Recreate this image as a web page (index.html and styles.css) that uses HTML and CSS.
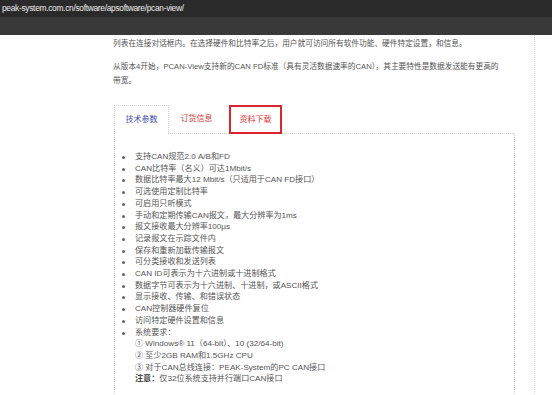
FILE: index.html
```html
<!DOCTYPE html>
<html lang="zh-CN">
<head>
    <meta charset="UTF-8"/>
    <title>PCAN-View</title>
    <link rel="stylesheet" href="styles.css">
</head>
<body>

<header class="browser-bar">
    <div class="url">peak-system.com.cn/software/apsoftware/pcan-view/</div>
    <div class="toolbar"></div>
</header>

<div class="page">
    <main class="main-content">
        <p class="text lead">PCAN-View 是一个用于查看、发送和记录 CAN 报文的 Windows 软件，所有支持的 PEAK CAN 接口都会被识别并显示在硬件<br>列表在连接对话框内。在选择硬件和比特率之后，用户就可访问所有软件功能、硬件特定设置，和信息。</p>
        <p class="text">从版本4开始，PCAN-View支持新的CAN FD标准（具有灵活数据速率的CAN），其主要特性是数据发送能有更高的带宽。</p>

        <div class="tabs">
            <div class="tab active">技术参数</div>
            <div class="tab">订货信息</div>
            <div class="tab marked">资料下载</div>
        </div>

        <div class="panel">
            <ul class="spec-list">
                <li>支持CAN规范2.0 A/B和FD</li>
                <li>CAN比特率（名义）可达1Mbit/s</li>
                <li>数据比特率最大12 Mbit/s（只适用于CAN FD接口）</li>
                <li>可选使用定制比特率</li>
                <li>可启用只听模式</li>
                <li>手动和定期传输CAN报文，最大分辨率为1ms</li>
                <li>报文接收最大分辨率100µs</li>
                <li>记录报文在示踪文件内</li>
                <li>保存和重新加载传输报文</li>
                <li>可分类接收和发送列表</li>
                <li>CAN ID可表示为十六进制或十进制格式</li>
                <li>数据字节可表示为十六进制、十进制，或ASCII格式</li>
                <li>显示接收、传输、和错误状态</li>
                <li>CAN控制器硬件复位</li>
                <li>访问特定硬件设置和信息</li>
                <li>系统要求：
                    <div class="req">① Windows® 11（64-bit）、10 (32/64-bit)</div>
                    <div class="req">② 至少2GB RAM和1.5GHz CPU</div>
                    <div class="req">③ 对于CAN总线连接：PEAK-System的PC CAN接口</div>
                </li>
            </ul>
            <p class="note"><b>注意：</b>仅32位系统支持并行端口CAN接口</p>
        </div>
    </main>
</div>

</body>
</html>
```

FILE: styles.css
```css
* {
    margin: 0;
    padding: 0;
    box-sizing: border-box;
}

body {
    font-family: "Liberation Sans", "Noto Sans CJK SC", sans-serif;
    color: #555;
    background-color: white;
    overflow: hidden;
}

.browser-bar {
    position: absolute;
    top: 0;
    left: 0;
    width: 100%;
    z-index: 2;
}

.url {
    height: 17px;
    padding: 3px 0 0 2px;
    font-size: 8.4px;
    letter-spacing: -0.3px;
    line-height: 11px;
    color: #ececec;
    background-color: #2a2a2a;
}

.toolbar {
    height: 18px;
    background-color: #393939;
}

.page {
    width: 535px;
    min-height: 395px;
    border-right: 1px dotted #cfd8e0;
}

.main-content {
    padding: 23px 0 0 113px;
    width: 534px;
}

.text {
    width: 390px;
    font-size: 7.7px;
    line-height: 14px;
    margin-bottom: 9px;
}

.text.lead {
    white-space: nowrap;
}

.tabs {
    display: flex;
    margin-top: 17px;
    height: 28px;
    margin-left: 1px;
}

.tab {
    width: 55px;
    height: 28px;
    font-size: 8px;
    line-height: 28px;
    text-align: center;
    color: #e03a3a;
}

.tab.active {
    color: #3b4cb4;
    background-color: white;
    border: 1px dotted #d2d2d2;
    border-bottom: none;
    height: 29px;
    position: relative;
    z-index: 1;
}

.tab.marked {
    width: 53px;
    height: 29px;
    margin-left: 5px;
    border: 2px solid #dc2430;
    line-height: 25px;
    position: relative;
    z-index: 1;
}

.panel {
    width: 401px;
    margin-left: 1px;
    border: 1px dotted #d2d2d2;
    padding: 17px 0 20px 20px;
    font-size: 8.1px;
    line-height: 11.7px;
}

.spec-list {
    list-style: none;
}

.spec-list li {
    position: relative;
}

.spec-list li::before {
    content: "";
    position: absolute;
    left: -13px;
    top: 5px;
    width: 3px;
    height: 3px;
    border-radius: 50%;
    background-color: #666;
}

.note b {
    color: #444;
}
```
